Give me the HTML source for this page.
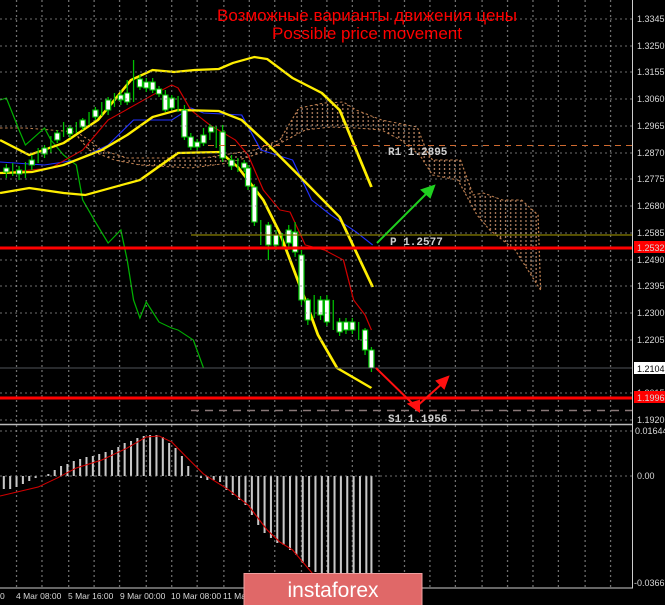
<!DOCTYPE html><html><head><style>
body{margin:0;background:#000;width:665px;height:605px;overflow:hidden}
svg{display:block}
.ax{font-family:"Liberation Sans",sans-serif;font-size:9px;fill:#d8d8d8}
.tx{font-family:"Liberation Sans",sans-serif;font-size:8.5px;fill:#d8d8d8}
.lb{font-family:"Liberation Mono",monospace;font-size:11px;font-weight:bold;fill:#d0d0d0}
</style></head><body>
<svg width="665" height="605" viewBox="0 0 665 605" xmlns="http://www.w3.org/2000/svg">
<defs>
<pattern id="cl" width="4" height="4" patternUnits="userSpaceOnUse"><rect x="1" y="0" width="1" height="2" fill="#b08060"/></pattern>
<clipPath id="cp"><rect x="0" y="0" width="497" height="588"/></clipPath>
</defs>
<rect width="665" height="605" fill="#000"/>
<g transform="scale(1.272,1)" clip-path="url(#cp)">
<g stroke="#8a8a8a" stroke-width="1" stroke-dasharray="2,3" opacity="0.8">
<path d="M13 0V588M33 0V588M54 0V588M74 0V588M94 0V588M115 0V588M135 0V588M155 0V588M176 0V588M196 0V588M216 0V588M237 0V588M257 0V588M277 0V588M298 0V588M318 0V588M338 0V588M358 0V588M379 0V588M399 0V588M419 0V588M439 0V588M460 0V588M480 0V588"/>
</g>
<polygon points="60,135 80,150 100,158 160,158 200,150 220,140 235,108 255,103 270,102 280,110 300,120 328,127 335,150 340,160 362,160 372,195 380,193 395,200 410,200 423,215 425,290 405,250 385,230 375,215 360,180 340,175 330,155 315,140 300,130 280,128 260,127 240,130 225,140 210,150 200,155 180,163 150,168 110,165 90,160 70,150" fill="url(#cl)"/>
<polyline fill="none" stroke="#c08050" stroke-dasharray="2,2" points="0,128 20,128 40,130 60,132 70,140 80,150 100,158 160,158 200,150 220,140 235,108 255,103 270,102 280,110 300,120 328,127 335,150 340,160 362,160 372,195 380,193 395,200 410,200 423,215 425,290"/>
<polyline fill="none" stroke="#c08050" stroke-dasharray="2,2" points="425,290 405,250 385,230 375,215 360,180 340,175 330,155 315,140 300,130 280,128 260,127 240,130 225,140 210,150 200,155 180,163 150,168 110,165 90,160 70,150 60,135"/>
<polyline fill="none" stroke="#00b000" points="0,100 5,98 15,130 20,145 35,128 40,140 50,155 60,165 65,200 75,222 85,243 95,230 100,260 105,300 110,318 115,302 125,322 135,328 140,330 152,340 160,368"/>
<polyline fill="none" stroke="#2030ff" points="0,162 35,165 60,160 85,145 105,120 135,120 150,108 160,113 190,115 205,150 230,160 245,200 260,215 280,232 293,245"/>
<polyline fill="none" stroke="#d00000" points="0,173 40,168 65,150 85,120 120,95 135,85 140,88 150,110 165,125 185,140 195,155 207,190 220,210 228,212 240,245 255,250 270,260 278,300 287,315 292,330"/>
<g fill="none" stroke="#ffee00" stroke-width="2.2">
<polyline points="0,140 23,155 50,143 77,120 103,80 120,70 137,72 153,70 172,69 183,63 200,57 210,59 230,78 253,93 267,110 292,187"/>
<polyline points="0,173 25,172 50,165 80,150 100,135 120,117 140,110 172,111 190,120 207,140 233,173 267,217 293,287"/>
<polyline points="0,193 23,188 50,193 67,195 110,180 140,153 173,152 187,167 207,200 220,233 240,300 250,335 265,368 292,388"/>
</g>
<g stroke="#00c000" stroke-width="1" fill="#fff">
<path d="M5 164V178M10 163V176M15 166V180M20 162V178M25 155V170M30 148V163M35 145V158M40 136V153M45 130V143M50 122V137M55 125V138M60 122V133M65 118V130M70 112V125M75 107V120M80 102V116M85 97V115M90 93V107M95 90V105M100 80V105M105 60V102M110 75V90M115 78V92M120 78V93M125 86V97M130 90V112M135 95V110M140 96V112M145 105V140M150 133V150M155 139V150M160 128V146M165 124V140M170 126V148M175 125V162M182 155V170M187 158V172M192 160V172M195 165V190M200 184V226M205 220V245M211 222V260M217 230V250M222 233V248M227 225V250M232 222V257M237 250V305M242 298V325M247 295V318M252 296V320M257 295V326M262 300V330M267 318V336M272 318V334M277 318V334M282 322V340M287 328V355M292 347V372"/>
<rect x="3" y="168" width="4" height="4"/><rect x="13" y="170" width="4" height="4"/><rect x="23" y="160" width="4" height="5"/><rect x="33" y="148" width="4" height="6"/><rect x="43" y="133" width="4" height="7"/><rect x="53" y="128" width="4" height="6"/><rect x="63" y="120" width="4" height="7"/><rect x="73" y="110" width="4" height="7"/><rect x="83" y="100" width="4" height="10"/><rect x="93" y="95" width="4" height="5"/><rect x="98" y="93" width="4" height="9"/><rect x="108" y="79" width="4" height="8"/><rect x="113" y="82" width="4" height="6"/><rect x="118" y="82" width="4" height="8"/><rect x="123" y="89" width="4" height="5"/><rect x="128" y="95" width="4" height="15"/><rect x="133" y="98" width="4" height="10"/><rect x="143" y="110" width="4" height="27"/><rect x="148" y="137" width="4" height="10"/><rect x="153" y="142" width="4" height="5"/><rect x="158" y="135" width="4" height="8"/><rect x="164" y="127" width="4" height="5"/><rect x="173" y="132" width="4" height="26"/><rect x="180" y="160" width="4" height="6"/><rect x="190" y="163" width="4" height="5"/><rect x="193" y="168" width="4" height="18"/><rect x="198" y="187" width="4" height="35"/><rect x="209" y="225" width="4" height="20"/><rect x="215" y="235" width="4" height="10"/><rect x="225" y="230" width="4" height="13"/><rect x="230" y="232" width="4" height="20"/><rect x="235" y="255" width="4" height="45"/><rect x="240" y="300" width="4" height="20"/><rect x="250" y="300" width="4" height="15"/><rect x="255" y="300" width="4" height="22"/><rect x="265" y="322" width="4" height="10"/><rect x="270" y="322" width="4" height="8"/><rect x="275" y="322" width="4" height="8"/><rect x="285" y="330" width="4" height="20"/><rect x="290" y="350" width="4" height="18"/>
</g>
<g stroke="#c8c8c8" stroke-width="1.6">
<path d="M3 476V489M8 476V489M13 476V487M18 476V484M23 476V481M28 476V478M38 476V474M43 476V470M48 476V466M53 476V464M58 476V461M63 476V459M68 476V457M73 476V456M78 476V454M83 476V452M88 476V450M93 476V447M98 476V443M103 476V441M108 476V438M113 476V436M118 476V435M123 476V435M128 476V437M133 476V443M138 476V448M143 476V456M148 476V466M158 476V478M163 476V480M168 476V480M173 476V482M178 476V490M183 476V495M188 476V500M193 476V505M198 476V515M203 476V525M208 476V533M213 476V538M218 476V543M223 476V545M228 476V550M233 476V555M238 476V563M243 476V567M248 476V572M253 476V575M258 476V580M263 476V583M268 476V585M273 476V586M278 476V587M283 476V587M288 476V587M292 476V587"/>
</g>
<polyline fill="none" stroke="#d00000" points="0,496 20,490 30,487 45,478 60,468 80,460 100,448 115,437 125,436 135,442 145,455 160,474 170,482 180,490 195,505 210,530 220,542 230,550 240,565 250,580 260,590"/>
</g>
<g stroke="#8a8a8a" stroke-width="1" stroke-dasharray="2,3" opacity="0.8">
<path d="M0 19H632M0 46H632M0 72H632M0 99H632M0 126H632M0 153H632M0 179H632M0 206H632M0 233H632M0 260H632M0 286H632M0 313H632M0 340H632M0 393H632M0 420H632M0 431H632M0 476H632"/>
</g>
<line x1="208" y1="145.5" x2="632" y2="145.5" stroke="#d06a30" stroke-dasharray="6,5"/>
<line x1="191" y1="235" x2="632" y2="235" stroke="#8a8000" stroke-width="1.3"/>
<line x1="191" y1="410.5" x2="632" y2="410.5" stroke="#8a7878" stroke-width="1.5" stroke-dasharray="8,6"/>
<line x1="0" y1="368" x2="632" y2="368" stroke="#50555a"/>
<line x1="0" y1="248" x2="632" y2="248" stroke="#ff0000" stroke-width="3"/>
<line x1="0" y1="398" x2="632" y2="398" stroke="#ff0000" stroke-width="3"/>
<g stroke="#20d020" stroke-width="2" fill="#20d020"><line x1="377" y1="243" x2="428" y2="192"/><polygon points="434,186 422,190 430,197"/></g>
<g stroke="#ff1010" stroke-width="2" fill="#ff1010"><polyline fill="none" points="376,368 416,407 444,382"/><polygon points="419,411 409,404 419,401"/><polygon points="448,377 437,381 444,388"/></g>
<text class="lb" x="388" y="155">R1 1.2895</text>
<text class="lb" x="390" y="245">P 1.2577</text>
<text class="lb" x="388" y="422">S1 1.1956</text>
<text x="367" y="21" text-anchor="middle" font-family="Liberation Sans,sans-serif" font-size="17" fill="#ff0000">Возможные варианты движения цены</text>
<text x="367" y="39" text-anchor="middle" font-family="Liberation Sans,sans-serif" font-size="17" fill="#ff0000">Possible price movement</text>
<line x1="0" y1="424.5" x2="633" y2="424.5" stroke="#bbb" stroke-width="1.5"/>
<line x1="632.5" y1="0" x2="632.5" y2="588" stroke="#ccc"/>
<line x1="0" y1="588" x2="633" y2="588" stroke="#ccc"/>
<g class="ax">
<text x="637" y="22">1.3345</text><text x="637" y="49">1.3250</text><text x="637" y="75">1.3155</text><text x="637" y="102">1.3060</text><text x="637" y="129">1.2965</text><text x="637" y="156">1.2870</text><text x="637" y="182">1.2775</text><text x="637" y="209">1.2680</text><text x="637" y="236">1.2585</text><text x="637" y="263">1.2490</text><text x="637" y="289">1.2395</text><text x="637" y="316">1.2300</text><text x="637" y="343">1.2205</text><text x="637" y="396">1.2015</text><text x="637" y="423">1.1920</text>
<text x="635" y="434">0.01644</text><text x="637" y="479">0.00</text><text x="634" y="586">-0.03667</text>
</g>
<g class="tx">
<text x="0" y="599">0</text><text x="16" y="599">4 Mar 08:00</text><text x="68" y="599">5 Mar 16:00</text><text x="120" y="599">9 Mar 00:00</text><text x="171" y="599">10 Mar 08:00</text><text x="223" y="599">11 Ma</text>
</g>
<rect x="634" y="241" width="31" height="12" fill="#ff0000"/><text class="ax" x="637" y="251" fill="#fff">1.2532</text>
<rect x="634" y="391" width="31" height="12" fill="#ff0000"/><text class="ax" x="637" y="401" fill="#fff">1.1996</text>
<rect x="634" y="362" width="31" height="12" fill="#fff"/><text x="637" y="372" font-family="Liberation Sans,sans-serif" font-size="9" fill="#000">1.2104</text>
<rect x="244" y="573.5" width="178" height="32" fill="#e06868" stroke="#f0a0a0"/>
<text x="333" y="597" text-anchor="middle" font-family="Liberation Sans,sans-serif" font-size="21" fill="#fff">instaforex</text>
</svg>
</body></html>
